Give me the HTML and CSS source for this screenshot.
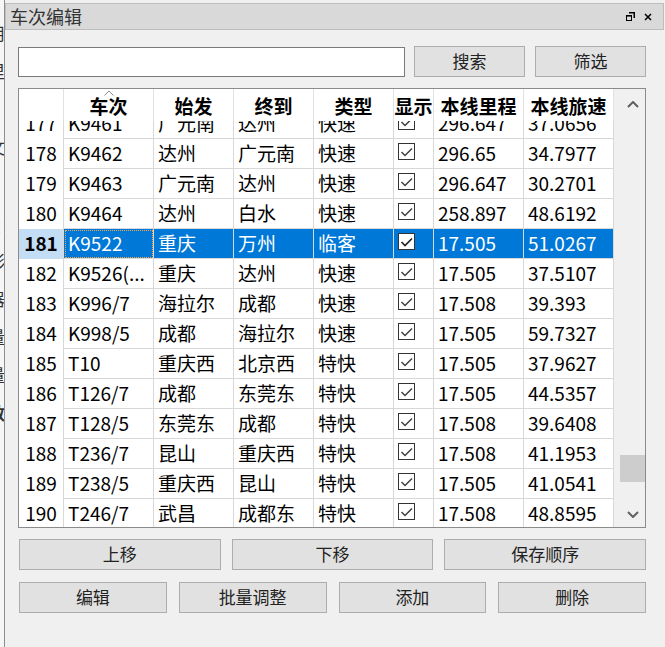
FILE: index.html
```html
<!DOCTYPE html>
<html lang="zh-CN">
<head>
<meta charset="utf-8">
<title>车次编辑</title>
<link rel="stylesheet" href="styles.css">
</head>
<body>
<div class="desk">
  <div class="behind">
    <div class="behind-text">
      <span>用</span><span>里</span><span>V</span><span>文</span><span>Z</span><span>Q</span><span>彩</span><span>器</span><span>量</span><span>量</span><span class="b">数</span>
    </div>
  </div>

  <section class="dock">
    <header class="titlebar">
      <span class="title">车次编辑</span>
      <span class="title-btns">
        <svg class="ico" width="9" height="9" viewBox="0 0 9 9">
          <path d="M3 0.75H8.25V6" fill="none" stroke="#000" stroke-width="1.5"/>
          <rect x="0.5" y="3.5" width="5" height="5" fill="none" stroke="#000" stroke-width="1"/>
          <rect x="0.5" y="3" width="5" height="1.6" fill="#000"/>
        </svg>
        <svg class="ico" width="8" height="8" viewBox="0 0 8 8">
          <path d="M1 1L7 7M7 1L1 7" stroke="#000" stroke-width="1.5"/>
        </svg>
      </span>
    </header>

    <div class="content">
      <div class="search-row">
        <input class="search-input" type="text">
        <button class="btn btn-search">搜索</button>
        <button class="btn btn-search">筛选</button>
      </div>

      <div class="table">
        <div class="grid">
          <div class="row head">
            <div class="hcell"></div>
            <div class="hcell sorted">车次
              <svg class="sort" width="10" height="6" viewBox="0 0 10 6"><polyline points="0.5,5.5 5,1 9.5,5.5" fill="none" stroke="#8a8a8a" stroke-width="1"/></svg>
            </div>
            <div class="hcell">始发</div>
            <div class="hcell">终到</div>
            <div class="hcell">类型</div>
            <div class="hcell">显示</div>
            <div class="hcell">本线里程</div>
            <div class="hcell">本线旅速</div>
          </div>

          <div class="viewport">
            <div class="rows">
              <div class="row"><div class="vh">177</div><div class="cell">K9461</div><div class="cell">广元南</div><div class="cell">达州</div><div class="cell">快速</div><div class="cell chk-cell"><span class="chk"></span></div><div class="cell">296.647</div><div class="cell">37.0656</div></div>
              <div class="row"><div class="vh">178</div><div class="cell">K9462</div><div class="cell">达州</div><div class="cell">广元南</div><div class="cell">快速</div><div class="cell chk-cell"><span class="chk"></span></div><div class="cell">296.65</div><div class="cell">34.7977</div></div>
              <div class="row"><div class="vh">179</div><div class="cell">K9463</div><div class="cell">广元南</div><div class="cell">达州</div><div class="cell">快速</div><div class="cell chk-cell"><span class="chk"></span></div><div class="cell">296.647</div><div class="cell">30.2701</div></div>
              <div class="row"><div class="vh">180</div><div class="cell">K9464</div><div class="cell">达州</div><div class="cell">白水</div><div class="cell">快速</div><div class="cell chk-cell"><span class="chk"></span></div><div class="cell">258.897</div><div class="cell">48.6192</div></div>
              <div class="row sel"><div class="vh">181</div><div class="cell focus">K9522</div><div class="cell">重庆</div><div class="cell">万州</div><div class="cell">临客</div><div class="cell chk-cell"><span class="chk"></span></div><div class="cell">17.505</div><div class="cell">51.0267</div></div>
              <div class="row"><div class="vh">182</div><div class="cell">K9526(...</div><div class="cell">重庆</div><div class="cell">达州</div><div class="cell">快速</div><div class="cell chk-cell"><span class="chk"></span></div><div class="cell">17.505</div><div class="cell">37.5107</div></div>
              <div class="row"><div class="vh">183</div><div class="cell">K996/7</div><div class="cell">海拉尔</div><div class="cell">成都</div><div class="cell">快速</div><div class="cell chk-cell"><span class="chk"></span></div><div class="cell">17.508</div><div class="cell">39.393</div></div>
              <div class="row"><div class="vh">184</div><div class="cell">K998/5</div><div class="cell">成都</div><div class="cell">海拉尔</div><div class="cell">快速</div><div class="cell chk-cell"><span class="chk"></span></div><div class="cell">17.505</div><div class="cell">59.7327</div></div>
              <div class="row"><div class="vh">185</div><div class="cell">T10</div><div class="cell">重庆西</div><div class="cell">北京西</div><div class="cell">特快</div><div class="cell chk-cell"><span class="chk"></span></div><div class="cell">17.505</div><div class="cell">37.9627</div></div>
              <div class="row"><div class="vh">186</div><div class="cell">T126/7</div><div class="cell">成都</div><div class="cell">东莞东</div><div class="cell">特快</div><div class="cell chk-cell"><span class="chk"></span></div><div class="cell">17.505</div><div class="cell">44.5357</div></div>
              <div class="row"><div class="vh">187</div><div class="cell">T128/5</div><div class="cell">东莞东</div><div class="cell">成都</div><div class="cell">特快</div><div class="cell chk-cell"><span class="chk"></span></div><div class="cell">17.508</div><div class="cell">39.6408</div></div>
              <div class="row"><div class="vh">188</div><div class="cell">T236/7</div><div class="cell">昆山</div><div class="cell">重庆西</div><div class="cell">特快</div><div class="cell chk-cell"><span class="chk"></span></div><div class="cell">17.508</div><div class="cell">41.1953</div></div>
              <div class="row"><div class="vh">189</div><div class="cell">T238/5</div><div class="cell">重庆西</div><div class="cell">昆山</div><div class="cell">特快</div><div class="cell chk-cell"><span class="chk"></span></div><div class="cell">17.505</div><div class="cell">41.0541</div></div>
              <div class="row"><div class="vh">190</div><div class="cell">T246/7</div><div class="cell">武昌</div><div class="cell">成都东</div><div class="cell">特快</div><div class="cell chk-cell"><span class="chk"></span></div><div class="cell">17.508</div><div class="cell">48.8595</div></div>
            </div>
          </div>
        </div>

        <div class="vscroll">
          <div class="sb-btn sb-up">
            <svg width="12" height="7" viewBox="0 0 12 7"><polyline points="1,6 6,1 11,6" fill="none" stroke="#606060" stroke-width="2"/></svg>
          </div>
          <div class="sb-track"><div class="sb-thumb"></div></div>
          <div class="sb-btn sb-down">
            <svg width="12" height="7" viewBox="0 0 12 7"><polyline points="1,1 6,6 11,1" fill="none" stroke="#606060" stroke-width="2"/></svg>
          </div>
        </div>
      </div>

      <div class="btn-row three">
        <button class="btn">上移</button>
        <button class="btn">下移</button>
        <button class="btn">保存顺序</button>
      </div>
      <div class="btn-row four">
        <button class="btn">编辑</button>
        <button class="btn">批量调整</button>
        <button class="btn">添加</button>
        <button class="btn">删除</button>
      </div>
    </div>
  </section>
</div>
</body>
</html>
```

FILE: styles.css
```css
html, body {
  margin: 0;
  padding: 0;
}

body {
  width: 665px;
  height: 647px;
  overflow: hidden;
  background: #f0f0f0;
  font-family: "Noto Sans CJK SC", "Noto Sans", sans-serif;
  color: #000;
}

.desk {
  display: flex;
  height: 647px;
}

/* sliver of the window lying behind the dock */
.behind {
  width: 4px;
  flex: none;
  overflow: hidden;
  background: #f6f6f6;
  border-right: 1px solid #8e8e8e;
}

.behind-text {
  width: 16px;
  margin-left: -12px;
  padding-top: 14px;
  display: flex;
  flex-direction: column;
  font-size: 17px;
  line-height: 38px;
  color: #333;
}

.behind-text .b {
  font-weight: bold;
}

.dock {
  flex: 1;
  display: flex;
  flex-direction: column;
  min-width: 0;
}

/* dock title bar */
.titlebar {
  margin-top: 3px;
  margin-right: 1px;
  height: 25px;
  border: 1px solid #bdbdbd;
  background: #d9d9d9;
  display: flex;
  align-items: center;
  justify-content: space-between;
  padding: 0 11px 0 4px;
}

.title {
  font-size: 18px;
  color: #333;
  line-height: 25px;
}

.title-btns {
  display: flex;
  align-items: center;
  gap: 9px;
}

.ico {
  display: block;
}

.content {
  padding: 16px 19px 0 13px;
}

/* search row */
.search-row {
  display: flex;
  align-items: flex-start;
  height: 31px;
}

.search-input {
  width: 387px;
  height: 30px;
  margin: 1px 9px 0 0;
  box-sizing: border-box;
  border: 1px solid #7a7a7a;
  background: #fff;
  padding: 0;
  outline: none;
}

.btn {
  box-sizing: border-box;
  height: 31px;
  border: 1px solid #adadad;
  background: #e1e1e1;
  font-family: "Noto Sans CJK SC", sans-serif;
  font-size: 17px;
  line-height: 25px;
  color: #222;
  padding: 0 0 2px;
  margin: 0;
}

.btn-search {
  width: 111px;
}

.btn-search + .btn-search {
  margin-left: 10px;
}

/* table */
.table {
  margin-top: 11px;
  height: 440px;
  box-sizing: border-box;
  border: 1px solid #8b8b8b;
  background: #fff;
  display: flex;
}

.grid {
  width: 595px;
  display: flex;
  flex-direction: column;
}

.row {
  display: grid;
  grid-template-columns: 45px 90px 80px 80px 80px 40px 90px 90px;
}

.head {
  height: 32px;
  background: #fff;
}

.hcell {
  border-right: 1px solid #e2e2e2;
  font-weight: bold;
  font-size: 19px;
  line-height: 34px;
  text-align: center;
  white-space: nowrap;
  overflow: hidden;
}

.sorted {
  position: relative;
}

.sort {
  position: absolute;
  top: 1px;
  left: 40px;
}

.viewport {
  height: 406px;
  overflow: hidden;
}

.rows {
  margin-top: -12px;
}

.vh {
  height: 30px;
  border-right: 1px solid #d8d8d8;
  font-size: 19px;
  line-height: 28px;
  text-align: center;
  background: #fff;
}

.cell {
  height: 29px;
  border-right: 1px solid #d8d8d8;
  border-bottom: 1px solid #d8d8d8;
  padding-left: 4px;
  font-size: 19px;
  line-height: 27px;
  white-space: nowrap;
  overflow: hidden;
}

.chk-cell {
  padding-top: 4px;
  height: 25px;
  line-height: normal;
}

.chk {
  display: block;
  width: 15px;
  height: 15px;
  border: 1px solid #333;
  background: #fff url("data:image/svg+xml,%3Csvg xmlns='http://www.w3.org/2000/svg' width='15' height='15' viewBox='0 0 15 15'%3E%3Cpolyline points='2.5,8 6,11.5 13,4.5' fill='none' stroke='%23404040' stroke-width='1.5'/%3E%3C/svg%3E") no-repeat center;
}

/* current row */
.sel .vh {
  background: #c2ddf4;
  font-weight: bold;
}

.sel .cell {
  background: #0078d7;
  color: #fff;
}

.sel .chk {
  background-image: url("data:image/svg+xml,%3Csvg xmlns='http://www.w3.org/2000/svg' width='15' height='15' viewBox='0 0 15 15'%3E%3Cpolyline points='2.5,8 6,11.5 13,4.5' fill='none' stroke='%23222' stroke-width='1.7'/%3E%3C/svg%3E");
}

.focus {
  outline: 1px dotted #f4a64a;
  outline-offset: -2px;
}

/* vertical scrollbar */
.vscroll {
  width: 31px;
  box-sizing: border-box;
  padding-left: 6px;
  background: #f0f0f0;
  display: flex;
  flex-direction: column;
}

.sb-btn {
  display: flex;
  align-items: center;
  justify-content: center;
}

.sb-up {
  height: 30px;
}

.sb-down {
  height: 25px;
}

.sb-track {
  flex: 1;
}

.sb-thumb {
  margin-top: 336px;
  height: 27px;
  background: #cdcdcd;
}

/* action buttons */
.btn-row {
  display: grid;
  padding-left: 1px;
}

.three {
  margin-top: 11px;
  grid-template-columns: repeat(3, 1fr);
  column-gap: 11px;
}

.four {
  margin-top: 12px;
  grid-template-columns: repeat(4, 1fr);
  column-gap: 12px;
}
```
